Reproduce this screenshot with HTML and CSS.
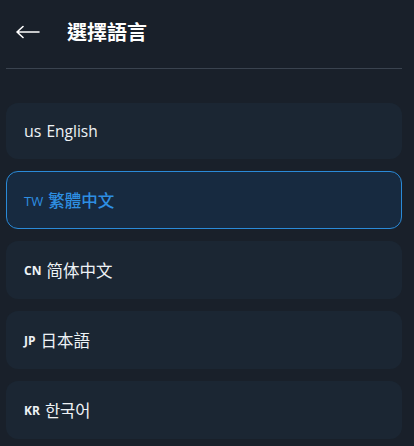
FILE: index.html
```html
<!DOCTYPE html>
<html lang="zh-Hant">
<head>
<meta charset="utf-8">
<title>選擇語言</title>
<link rel="stylesheet" href="styles.css">
</head>
<body>
<div class="page">
  <header class="header">
    <button class="back" aria-label="back">
      <svg width="24" height="14" viewBox="0 0 24 14"><path d="M1 7 H23 M1 7 L7 1.5 M1 7 L7 12.5" fill="none" stroke="#ffffff" stroke-width="1.6" stroke-linecap="round" stroke-linejoin="round"/></svg>
    </button>
    <h1 class="title">選擇語言</h1>
  </header>
  <div class="divider"></div>
  <ul class="list">
    <li class="item latin"><span class="code-lower">us</span><span class="name">English</span></li>
    <li class="item cjk selected"><span class="code">TW</span><span class="name tc">繁體中文</span></li>
    <li class="item cjk"><span class="code bold">CN</span><span class="name sc">简体中文</span></li>
    <li class="item cjk"><span class="code bold">JP</span><span class="name jp">日本語</span></li>
    <li class="item cjk"><span class="code bold">KR</span><span class="name kr">한국어</span></li>
  </ul>
</div>
</body>
</html>
```

FILE: styles.css
```css
html, body {
  margin: 0;
  padding: 0;
  background: #19202a;
}
body {
  font-family: "Liberation Sans", "Noto Sans CJK TC", "Noto Sans CJK KR", sans-serif;
  color: #eef2f6;
}
.page {
  width: 414px;
}
.header {
  display: flex;
  align-items: center;
  height: 64px;
  padding: 0 0 0 16px;
  gap: 27px;
}
.back {
  background: none;
  border: 0;
  padding: 0;
  margin: 0;
  width: 24px;
  height: 14px;
  display: flex;
  cursor: pointer;
}
.title {
  margin: 0;
  font-size: 20px;
  font-weight: 700;
  color: #ffffff;
  line-height: 28px;
  font-family: "Noto Sans CJK TC", sans-serif;
}
.divider {
  height: 1px;
  background: #3a434f;
  margin: 4px 12px 0 6px;
}
.list {
  list-style: none;
  margin: 0;
  padding: 34px 12px 0 6px;
  display: flex;
  flex-direction: column;
  gap: 12px;
}
.item {
  box-sizing: border-box;
  background: #1b2633;
  border-radius: 12px;
  padding: 0 18px;
  display: flex;
  align-items: center;
  gap: 5px;
  font-size: 16px;
  line-height: 20px;
  height: 58px;
}
.item.latin { height: 56px; }
.name { font-size: 16.5px; }
.name.tc { font-family: "Noto Sans CJK TC", sans-serif; }
.name.sc { font-family: "Noto Sans CJK SC", sans-serif; }
.name.jp { font-family: "Noto Sans CJK JP", sans-serif; }
.name.kr { font-family: "Noto Sans CJK KR", sans-serif; }
.code-lower {
  font-size: 16px;
  font-family: "Open Sans", sans-serif;
}
.latin .name { font-family: "Open Sans", sans-serif; font-size: 15.5px; }
.code {
  font-size: 12px;
  font-family: "Open Sans", sans-serif;
  padding-top: 2px;
}
.code.bold { font-weight: 700; }
.selected {
  background: #172a40;
  border: 1px solid #2a8ad8;
  padding: 0 17px;
  color: #2e8fe2;
}
.selected .code { font-size: 13px; }
.selected .name { font-weight: 500; }
```
